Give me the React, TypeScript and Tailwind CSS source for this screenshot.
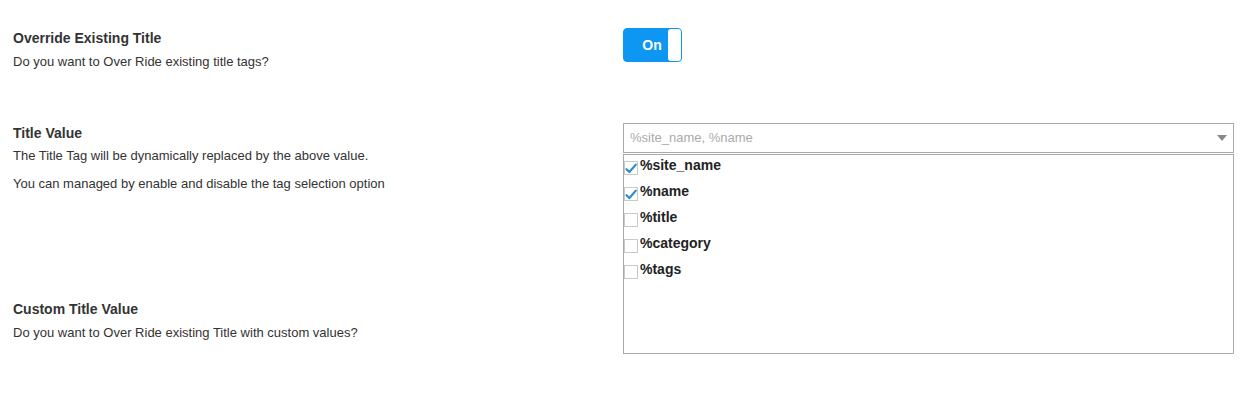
import React, { useState } from "react";

const tags = [
  { name: "%site_name", checked: true },
  { name: "%name", checked: true },
  { name: "%title", checked: false },
  { name: "%category", checked: false },
  { name: "%tags", checked: false },
];

function Check({ checked }: { checked: boolean }) {
  return (
    <span className="relative mt-[6px] h-[14px] w-[14px] shrink-0 border border-[#c9c9c9] bg-white">
      {checked && (
        <svg viewBox="0 0 14 14" className="absolute -left-px -top-px h-[14px] w-[14px]">
          <path d="M2.5 8.2 L5.4 11 L11.8 3.6" fill="none" stroke="#2f8bd0" strokeWidth="2.2" strokeLinecap="round" strokeLinejoin="round" />
        </svg>
      )}
    </span>
  );
}

export default function App() {
  const [on, setOn] = useState(true);
  const [selected, setSelected] = useState(tags.map((t) => t.checked));

  const value = tags.filter((_, i) => selected[i]).map((t) => t.name).join(", ");

  return (
    <div
      className="h-[420px] w-[1249px] bg-white pl-[13px] text-[#333]"
      style={{ fontFamily: '"Liberation Sans", Arial, sans-serif' }}
    >
      {/* override */}
      <div className="grid grid-cols-[610px_611px] pt-[28px]">
        <div>
          <div className="text-[14px] font-bold leading-[20px]">Override Existing Title</div>
          <div className="mt-[4px] text-[13px] leading-[20px]">Do you want to Over Ride existing title tags?</div>
        </div>
        <div>
          <button
            onClick={() => setOn(!on)}
            className="flex h-[34px] w-[59px] items-stretch rounded-[4px] border border-[#0d97f2] bg-[#0d97f2] p-0 text-white"
          >
            <span className="flex flex-1 items-center justify-center pl-[12px] text-[14px] font-bold">{on ? "On" : "Off"}</span>
            <span className="w-[13px] rounded-[3px] bg-white" />
          </button>
        </div>
      </div>

      {/* title value */}
      <div className="mt-[51px] grid grid-cols-[610px_611px]">
        <div className="flex flex-col">
          <div className="text-[14px] font-bold leading-[20px]">Title Value</div>
          <div className="mt-[3px] text-[13px] leading-[20px]">The Title Tag will be dynamically replaced by the above value.</div>
          <div className="mt-[8px] text-[13px] leading-[20px]">You can managed by enable and disable the tag selection option</div>
          <div className="mt-[105px] text-[14px] font-bold leading-[20px]">Custom Title Value</div>
          <div className="mt-[4px] text-[13px] leading-[20px]">Do you want to Over Ride existing Title with custom values?</div>
        </div>
        <div>
          <div className="flex h-[30px] items-center justify-between border border-[#aaa] bg-white pl-[6px] pr-[6px]">
            <span className="text-[13px] text-[#aaa]">{value}</span>
            <svg viewBox="0 0 10 6" className="h-[6px] w-[10px]">
              <path d="M0 0 H10 L5 6 Z" fill="#888" />
            </svg>
          </div>
          <div className="mt-px h-[200px] border border-[#aaa] bg-white">
            {tags.map((t, i) => (
              <label key={t.name} className="flex h-[26px] cursor-pointer items-start" onClick={() => setSelected(selected.map((s, j) => (j === i ? !s : s)))}>
                <Check checked={selected[i]} />
                <span className="ml-[2px] text-[14px] font-bold leading-[20px] text-[#222]">{t.name}</span>
              </label>
            ))}
          </div>
        </div>
      </div>
    </div>
  );
}
